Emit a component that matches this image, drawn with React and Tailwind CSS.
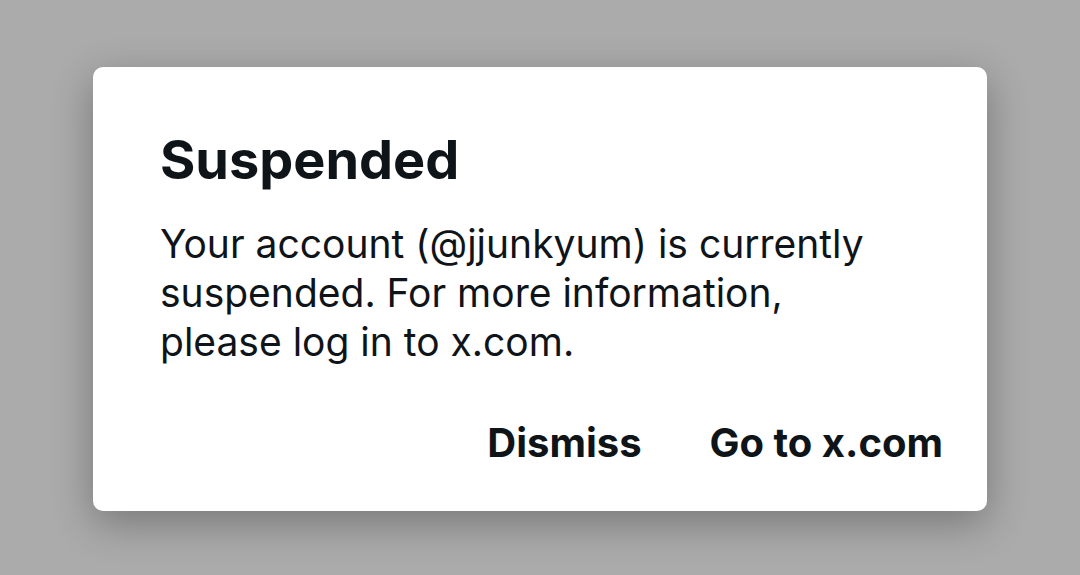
import React from 'react';

export default function App() {
  return (
    <div className="w-[1080px] h-[575px] bg-[#ababab] flex items-start justify-center pt-[67px]" style={{ fontFamily: 'Inter, "Noto Sans", sans-serif' }}>
      <div className="w-[894px] h-[444px] bg-white rounded-[10px] shadow-[0_12px_40px_rgba(0,0,0,0.3)] pl-[67px] pr-[44px] pt-[61px] text-[#0f1419] flex flex-col">
        <h1 className="text-[54px] leading-[64px] font-bold">Suspended</h1>
        <p className="text-[39px] leading-[49px] mt-[27px] max-w-[725px]">
          Your account (@jjunkyum) is currently suspended. For more information, please log in to x.com.
        </p>
        <div className="flex justify-end gap-[68px] mt-[53px] text-[40px] font-bold leading-[48px]">
          <button>Dismiss</button>
          <button>Go to x.com</button>
        </div>
      </div>
    </div>
  );
}
